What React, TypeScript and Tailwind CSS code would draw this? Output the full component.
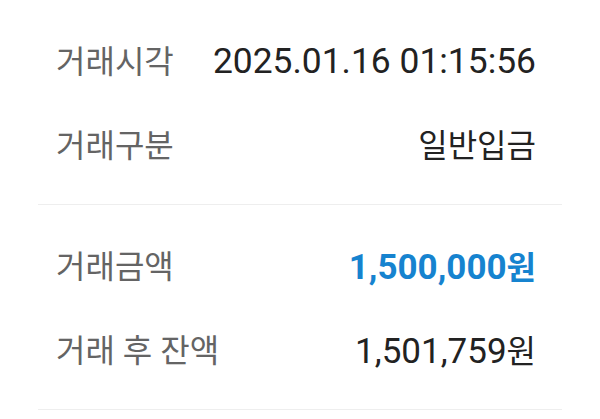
import React from "react";

const font = { fontFamily: '"Roboto", "Noto Sans CJK KR", sans-serif' };

function Row({ label, children }: { label: string; children: React.ReactNode }) {
  return (
    <div className="flex h-[84px] items-center justify-between">
      <span className="text-[32px] leading-none text-[#646464]">{label}</span>
      <span className="flex items-baseline leading-none">{children}</span>
    </div>
  );
}

export default function App() {
  return (
    <div className="h-[419px] w-[600px] overflow-hidden bg-white" style={font}>
      <div className="mx-[38px] border-b border-[#eeeeee] pb-[16px] pl-[18px] pr-[26px] pt-[20px]">
        <Row label="거래시각">
          <span className="text-[35.4px] text-[#222222]">2025.01.16 01:15:56</span>
        </Row>
        <Row label="거래구분">
          <span className="text-[32px] text-[#222222]">일반입금</span>
        </Row>
      </div>
      <div className="mx-[38px] border-b border-[#eeeeee] pb-[16px] pl-[18px] pr-[26px] pt-[20px]">
        <Row label="거래금액">
          <span className="text-[35px] font-bold text-[#1683cf]">1,500,000</span>
          <span className="text-[32px] font-bold text-[#1683cf]">원</span>
        </Row>
        <Row label="거래 후 잔액">
          <span className="text-[35px] text-[#222222]">1,501,759</span>
          <span className="text-[32px] text-[#222222]">원</span>
        </Row>
      </div>
    </div>
  );
}
